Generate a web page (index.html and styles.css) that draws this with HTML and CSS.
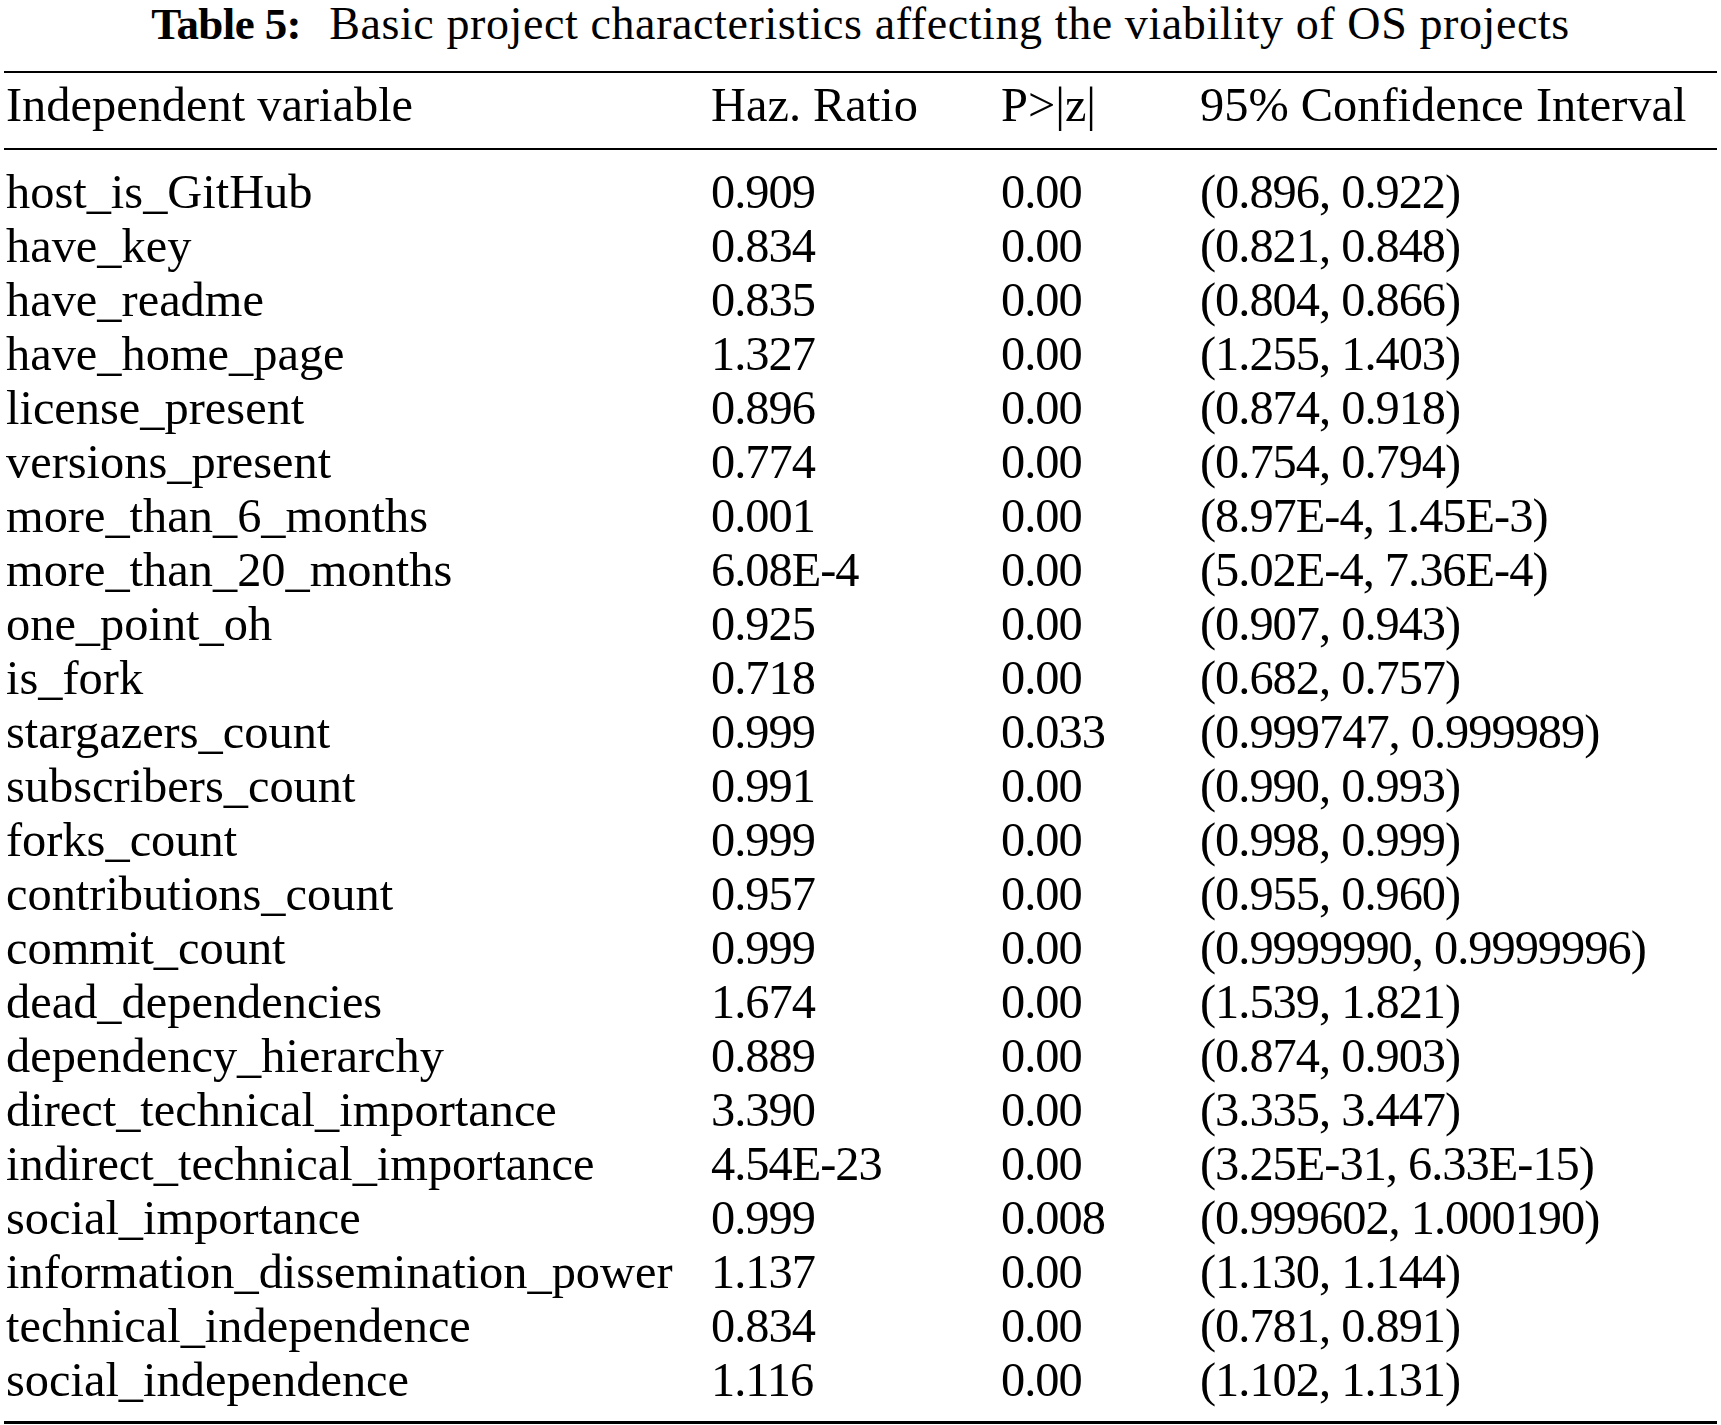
FILE: index.html
```html
<!DOCTYPE html>
<html lang="en">
<head>
<meta charset="utf-8">
<title>Table 5</title>
<link rel="stylesheet" href="styles.css">
</head>
<body>
<div class="page">
  <div class="caption"><b class="caption-label">Table 5:</b>&nbsp; Basic project characteristics affecting the viability of OS projects</div>
  <table class="tbl">
    <colgroup>
      <col class="c1"><col class="c2"><col class="c3"><col class="c4">
    </colgroup>
    <thead>
      <tr><th>Independent variable</th><th>Haz. Ratio</th><th>P&gt;|z|</th><th>95% Confidence Interval</th></tr>
    </thead>
    <tbody>
      <tr><td>host_is_GitHub</td><td>0.909</td><td>0.00</td><td>(0.896, 0.922)</td></tr>
      <tr><td>have_key</td><td>0.834</td><td>0.00</td><td>(0.821, 0.848)</td></tr>
      <tr><td>have_readme</td><td>0.835</td><td>0.00</td><td>(0.804, 0.866)</td></tr>
      <tr><td>have_home_page</td><td>1.327</td><td>0.00</td><td>(1.255, 1.403)</td></tr>
      <tr><td>license_present</td><td>0.896</td><td>0.00</td><td>(0.874, 0.918)</td></tr>
      <tr><td>versions_present</td><td>0.774</td><td>0.00</td><td>(0.754, 0.794)</td></tr>
      <tr><td>more_than_6_months</td><td>0.001</td><td>0.00</td><td>(8.97E-4, 1.45E-3)</td></tr>
      <tr><td>more_than_20_months</td><td>6.08E-4</td><td>0.00</td><td>(5.02E-4, 7.36E-4)</td></tr>
      <tr><td>one_point_oh</td><td>0.925</td><td>0.00</td><td>(0.907, 0.943)</td></tr>
      <tr><td>is_fork</td><td>0.718</td><td>0.00</td><td>(0.682, 0.757)</td></tr>
      <tr><td>stargazers_count</td><td>0.999</td><td>0.033</td><td>(0.999747, 0.999989)</td></tr>
      <tr><td>subscribers_count</td><td>0.991</td><td>0.00</td><td>(0.990, 0.993)</td></tr>
      <tr><td>forks_count</td><td>0.999</td><td>0.00</td><td>(0.998, 0.999)</td></tr>
      <tr><td>contributions_count</td><td>0.957</td><td>0.00</td><td>(0.955, 0.960)</td></tr>
      <tr><td>commit_count</td><td>0.999</td><td>0.00</td><td>(0.9999990, 0.9999996)</td></tr>
      <tr><td>dead_dependencies</td><td>1.674</td><td>0.00</td><td>(1.539, 1.821)</td></tr>
      <tr><td>dependency_hierarchy</td><td>0.889</td><td>0.00</td><td>(0.874, 0.903)</td></tr>
      <tr><td>direct_technical_importance</td><td>3.390</td><td>0.00</td><td>(3.335, 3.447)</td></tr>
      <tr><td>indirect_technical_importance</td><td>4.54E-23</td><td>0.00</td><td>(3.25E-31, 6.33E-15)</td></tr>
      <tr><td>social_importance</td><td>0.999</td><td>0.008</td><td>(0.999602, 1.000190)</td></tr>
      <tr><td>information_dissemination_power</td><td>1.137</td><td>0.00</td><td>(1.130, 1.144)</td></tr>
      <tr><td>technical_independence</td><td>0.834</td><td>0.00</td><td>(0.781, 0.891)</td></tr>
      <tr><td>social_independence</td><td>1.116</td><td>0.00</td><td>(1.102, 1.131)</td></tr>
    </tbody>
  </table>
</div>
</body>
</html>
```
FILE: styles.css
```css
html, body {
  margin: 0;
  padding: 0;
  background: #ffffff;
}

.page {
  font-family: "Liberation Serif", "Times New Roman", serif;
  color: #000000;
  padding: 0 4px;
}

.caption {
  font-size: 46px;
  line-height: 44px;
  letter-spacing: 0.6px;
  text-align: center;
  white-space: nowrap;
  padding-top: 2px;
  margin-bottom: 25px;
}

.caption-label {
  font-weight: bold;
  font-size: 45px;
  letter-spacing: -0.6px;
  padding-right: 4px;
}

.tbl {
  width: 100%;
  border-collapse: collapse;
  table-layout: fixed;
  font-size: 48.4px;
  line-height: 54px;
  border-top: 2px solid #000;
  border-bottom: 3px solid #000;
}

.c1 { width: 707px; }
.c2 { width: 290px; }
.c3 { width: 199px; }

.tbl th,
.tbl td {
  text-align: left;
  font-weight: normal;
  padding: 0;
  white-space: nowrap;
  vertical-align: baseline;
}

.tbl td + td {
  letter-spacing: -1px;
}

.tbl th:first-child,
.tbl td:first-child {
  padding-left: 2px;
}

.tbl thead th {
  padding-top: 5px;
  padding-bottom: 16px;
  border-bottom: 2px solid #000;
}

.tbl tbody tr:first-child td {
  padding-top: 15px;
}

.tbl tbody tr:last-child td {
  padding-bottom: 14px;
}
```
